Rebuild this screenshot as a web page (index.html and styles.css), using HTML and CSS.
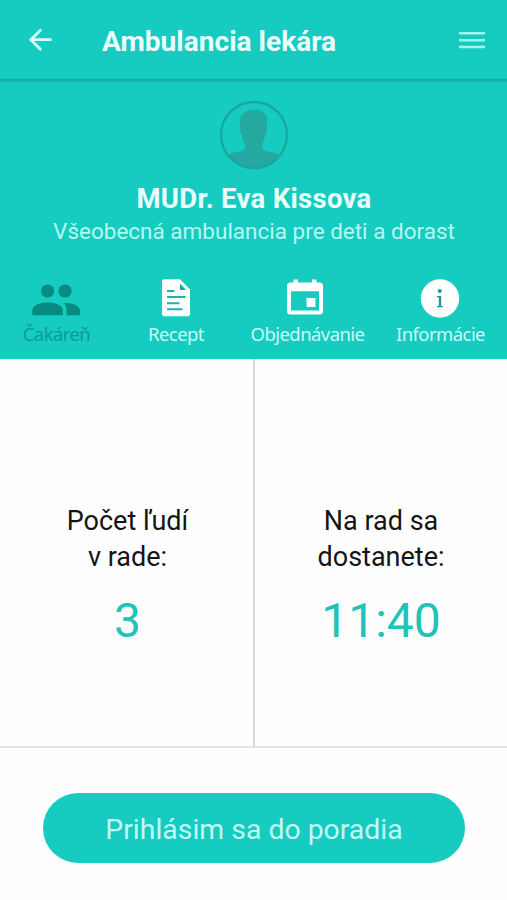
FILE: index.html
```html
<!DOCTYPE html>
<html lang="sk">
<head>
<meta charset="utf-8">
<title>Ambulancia lekára</title>
<link rel="stylesheet" href="styles.css">
</head>
<body>
<div class="app">
  <header class="bar">
    <svg class="back" width="24" height="24" viewBox="0 0 24 24"><path d="M22.500 11.700H2M12.200 1.500L1.700 11.700L12.200 22" fill="none" stroke="currentColor" stroke-width="2.7"/></svg>
    <h1 class="title"><span>Ambulancia lekára</span></h1>
    <svg class="menu" width="26" height="18" viewBox="0 0 26 18"><path d="M0 2.300H26M0 9.200H26M0 15.900H26" stroke="currentColor" stroke-width="2.500"/></svg>
  </header>
  <section class="profile">
    <svg class="avatar" width="70" height="70" viewBox="0 0 70 70">
      <path d="M9.500 55C15 50.500 25.500 53 26.300 48C26.300 44 23.500 40 23 35.500C21.500 34 20.700 31 21.500 28.500C19.500 19 21.500 14 26 12C32 8.800 38 9 43 11.500C48 13.500 49 20 47.500 28.500C48.500 31 47.500 34 46 35.500C45.500 40 43 44 43 48C43.500 53 54 50.500 60.500 55C54 64 44.500 68 35 68S16 64 9.500 55Z" fill="#25a89f"/>
      <circle cx="35" cy="35" r="33" fill="none" stroke="#17a9a0" stroke-width="2.400"/>
    </svg>
    <h2 class="name"><span>MUDr. Eva Kissova</span></h2>
    <p class="role"><span>Všeobecná ambulancia pre deti a dorast</span></p>
  </section>
  <nav class="tabs">
    <a class="tab active">
      <svg width="49" height="40" viewBox="0 0 49 40"><g fill="currentColor"><circle cx="15.600" cy="13" r="6.600"/><circle cx="33" cy="13" r="6.600"/><path d="M.3 37.200V32.500C.3 27 9 24.300 15.600 24.300S30.800 27 30.800 32.500V37.200ZM32 25C39 24.500 48 27 48 32.500V37.200H34.500V32.500C34.500 29 33.500 26.500 31.500 25Z"/></g></svg>
      <span>Čakáreň</span>
    </a>
    <a class="tab">
      <svg width="30" height="40" viewBox="0 0 30 40"><path d="M3.500 1.300H19L29 11.500V35.500Q29 38.300 26.500 38.300H3.500Q1 38.300 1 35.500V4Q1 1.300 3.500 1.300Z" fill="currentColor"/><path d="M19 5.500V12H25Z" fill="#15a99f"/><path d="M6 13H13.500M6 19H24.500M6 25.200H18.500M6 31.300H21.500" stroke="#16b8ae" stroke-width="1.900"/></svg>
      <span>Recept</span>
    </a>
    <a class="tab">
      <svg class="calendar" width="38" height="40" viewBox="0 0 38 40"><path fill="currentColor" fill-rule="evenodd" d="M7.500 1.500H12V4.500H26V1.500H30.500V4.500H33.500Q37 4.500 37 8V33Q37 36.500 33.500 36.500H4.500Q1 36.500 1 33V8Q1 4.500 4.500 4.500H7.500ZM5 13.300V32.500H33V13.300ZM20.500 20H29.500V29H20.500Z"/></svg>
      <span>Objednávanie</span>
    </a>
    <a class="tab">
      <svg class="info" width="40" height="40" viewBox="0 0 40 40"><circle cx="20" cy="20.500" r="19.200" fill="currentColor"/><circle cx="19.800" cy="13" r="2" fill="#159b98"/><path d="M17 18H21.200V28H22.800V29.300H17V28H18.800V19.300H17Z" fill="#159b98"/></svg>
      <span>Informácie</span>
    </a>
  </nav>
  <main class="stats">
    <div class="stat"><p class="label">Počet ľudí<br>v rade:</p><p class="value">3</p></div>
    <div class="stat right"><p class="label">Na rad sa<br>dostanete:</p><p class="value">11:40</p></div>
  </main>
  <footer class="foot"><button class="cta"><span>Prihlásim sa do poradia</span></button></footer>
</div>
</body>
</html>
```
FILE: styles.css
```css
* { box-sizing: border-box; }
body { margin: 0; font-family: Roboto, sans-serif; background: #fefefe; }
h1, h2, p { margin: 0; white-space: nowrap; }
.app { width: 507px; height: 900px; display: flex; flex-direction: column; overflow: hidden; }
.bar { height: 82px; display: flex; background: linear-gradient(#16cbc0 0 78px, #14b3a9 79px, #12aaa2 80px, #15c2b7 82px); color: #d8fffb; padding: 0 22px 0 29px; }
.back { margin-top: 28px; flex: none; }
.title { margin-left: 49px; flex: 1; font-size: 28.100px; line-height: 84px; font-weight: 700; color: #e8fffd; }
.menu { margin-top: 31px; flex: none; color: #a5f5ee; }
.profile { height: 188px; background: #16cbc0; display: flex; flex-direction: column; align-items: center; padding-top: 18px; }
.avatar { display: block; flex: none; }
.name { font-size: 27.500px; letter-spacing: .3px; line-height: 34px; margin-top: 12px; padding-left: 1px; color: #e8fffd; }
.role { font-size: 22.500px; line-height: 30px; margin-top: 0; padding-left: 1px; color: #b5f8f2; }
.tabs { height: 89px; display: grid; grid-template-columns: 113px 126px 137px 129px; background: #16cbc0; padding-top: 8px; }
.tab { display: flex; flex-direction: column; align-items: center; color: #fff; font: 18.500px/26px "Noto Sans", sans-serif; letter-spacing: -.57px; }
.tab svg { display: block; flex: none; }
.tab .calendar { margin-right: 5px; }
.tab .info { margin-right: 1px; }
.tab span { margin-top: 3px; color: #c8fbf6; white-space: nowrap; }
.tab.active { color: #078a82; }
.tab.active span { color: #0c9c93; }
.stats { height: 389px; display: grid; grid-template-columns: 255px 252px; border-bottom: 2px solid #e4e4e4; text-align: center; }
.stat { padding: 144px 0 0 2px; border-right: 2px solid #d9d9d9; }
.stat.right { border-right: 0; padding-left: 0; }
.label { font-size: 27px; line-height: 36px; color: #151515; }
.value { font-size: 48px; line-height: 56px; margin-top: 18px; color: #1fc3b8; }
.foot { flex: 1; padding: 45px 42px 0 43px; }
.cta { display: block; width: 100%; height: 70px; border: 0; border-radius: 35px; background: #16cbc0; color: #c0faf5; font: 28.400px/70px Roboto, sans-serif; padding: 2px 0 0; }
```
